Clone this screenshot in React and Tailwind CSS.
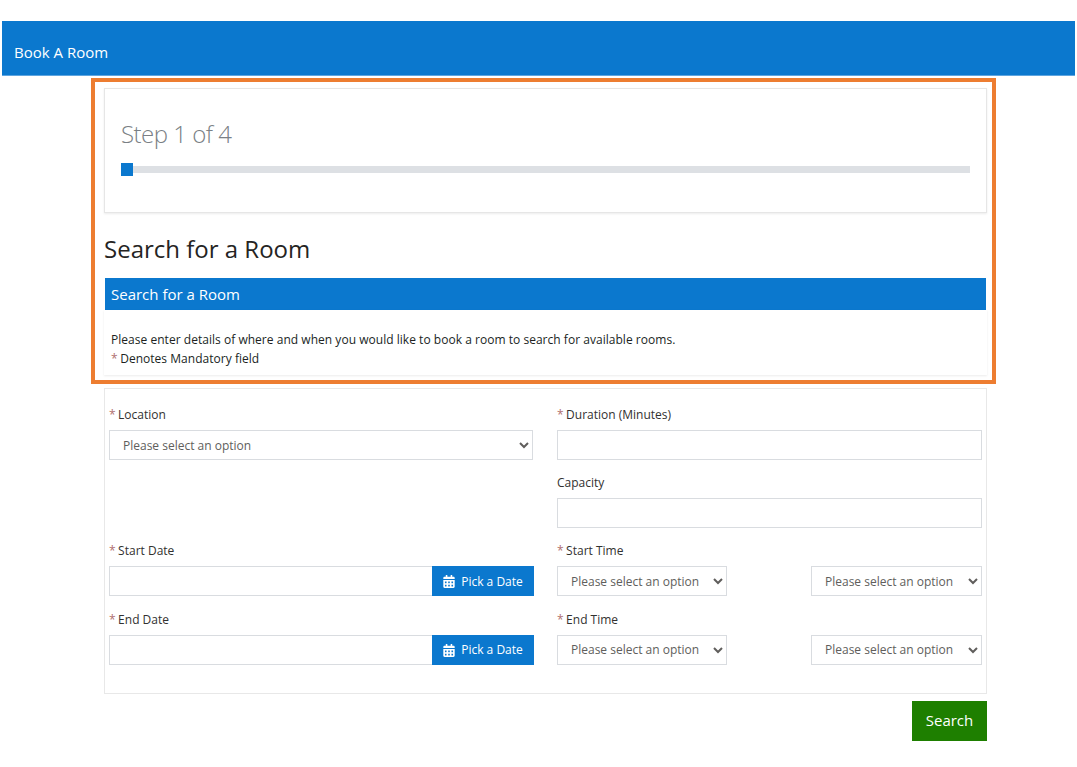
import React from "react";
import { FaCalendarAlt } from "react-icons/fa";

function Star() {
  return <span className="text-[#b0706f] mr-[2.5px]">*</span>;
}

function Label({ children, req = true }) {
  return (
    <div className="h-[25px] pt-[1px] text-[12px] leading-[18px] text-[#323130]">
      {req && <Star />}
      {children}
    </div>
  );
}

function Select({ className = "" }) {
  return (
    <select className={"h-[30px] border border-[#d9dce0] bg-white pl-[9px] pr-[4px] text-[12px] text-[#605e5c] outline-none " + className}>
      <option>Please select an option</option>
    </select>
  );
}

function TextInput() {
  return <input className="block h-[30px] w-full border border-[#d9dce0] bg-white outline-none" />;
}

function DateField({ label }) {
  return (
    <div className="h-[68.2px]">
      <Label>{label}</Label>
      <div className="flex h-[30px]">
        <input className="h-full min-w-0 flex-1 border border-r-0 border-[#d9dce0] bg-white outline-none" />
        <button className="flex h-full w-[102px] items-center justify-center gap-[6px] bg-[#0b78ce] pt-[1px] text-[12px] text-white">
          <FaCalendarAlt className="h-[13px] w-[12px]" />
          Pick a Date
        </button>
      </div>
    </div>
  );
}

function TimeField({ label }) {
  return (
    <div className="h-[68.2px]">
      <Label>{label}</Label>
      <div className="flex justify-between">
        <Select className="w-[170px]" />
        <Select className="w-[171px]" />
      </div>
    </div>
  );
}

export default function App() {
  return (
    <div className="h-[767px] w-[1077px] overflow-hidden bg-white pt-[21px] font-['Open_Sans',sans-serif]">
      <div className="mx-[2px] flex h-[55px] items-center border-b border-[#5ea5e0] bg-[#0b78ce] pl-[12px] pt-[9px] text-[15px] text-white">
        Book A Room
      </div>

      <div className="ml-[91px] mt-[2px] h-[306px] w-[905px] border-[4px] border-[#ed7d31] pl-[9px] pr-[5px] pt-[6px]">
        <div className="h-[125px] border border-[#e6e6e6] shadow-[0_1px_2px_rgba(0,0,0,0.08)] px-[16px] pt-[29px]">
          <div className="text-[24px] font-light leading-[32px] tracking-[-0.5px] text-[#7a7f85]">Step 1 of 4</div>
          <div className="relative mt-[16px] h-[7px] bg-[#dde0e4]">
            <div className="absolute -top-[3px] left-0 h-[13px] w-[12px] bg-[#0b78ce]" />
          </div>
        </div>

        <h1 className="mt-[19px] text-[24px] font-normal leading-[34px] text-[#252423]">Search for a Room</h1>

        <div className="ml-[1px] mr-[1px] mt-[12px] flex h-[32px] items-center bg-[#0b78ce] pl-[6px] text-[15px] text-white">
          Search for a Room
        </div>
        <div className="h-[65px] px-[7px] pt-[20px] text-[12px] leading-[19px] tracking-[0.03px] text-[#201f1e] shadow-[0_1px_2px_rgba(0,0,0,0.08)]">
          <div>Please enter details of where and when you would like to book a room to search for available rooms.</div>
          <div><Star />Denotes Mandatory field</div>
        </div>
      </div>

      <div className="ml-[104px] mt-[4px] h-[306px] w-[883px] border border-[#e8e8e8] pl-[4px] pr-[4px] pt-[16px]">
        <div className="grid grid-cols-[425px_425px] gap-x-[23px]">
          <div className="h-[68.2px]">
            <Label>Location</Label>
            <Select className="w-[424px]" />
          </div>
          <div className="h-[68.2px]">
            <Label>Duration (Minutes)</Label>
            <TextInput />
          </div>
          <div className="h-[68.2px]" />
          <div className="h-[68.2px]">
            <Label req={false}>Capacity</Label>
            <TextInput />
          </div>
          <DateField label="Start Date" />
          <TimeField label="Start Time" />
          <DateField label="End Date" />
          <TimeField label="End Time" />
        </div>
      </div>

      <div className="ml-[912px] mt-[7px] w-[75px]">
        <button className="flex h-[40px] w-full items-center justify-center bg-[#1e7f00] pb-[2px] text-[15px] text-white">
          Search
        </button>
      </div>
    </div>
  );
}
